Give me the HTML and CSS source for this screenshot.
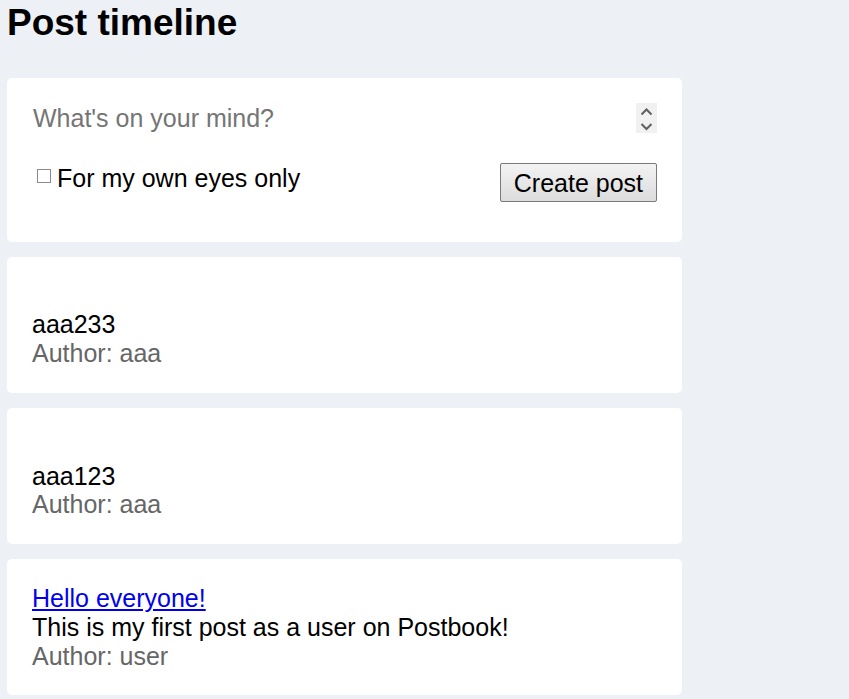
FILE: index.html
```html
<!DOCTYPE html>
<html lang="en">
<head>
<meta charset="utf-8">
<title>Post timeline</title>
<link rel="stylesheet" href="styles.css">
</head>
<body>
<div class="page">
  <h1 class="page-title">Post timeline</h1>
  <div class="feed">
    <form class="card composer">
      <div class="input-row">
        <textarea class="composer-input" rows="1" placeholder="What's on your mind?"></textarea>
        <div class="spin">
          <svg width="21" height="30" viewBox="0 0 21 30" aria-hidden="true">
            <path d="M5.5 11.5 L10.5 6.5 L15.5 11.5" fill="none" stroke="#5f5f5f" stroke-width="2"/>
            <path d="M5.5 21 L10.5 26 L15.5 21" fill="none" stroke="#5f5f5f" stroke-width="2"/>
          </svg>
        </div>
      </div>
      <div class="actions">
        <label class="private">
          <input class="private-box" type="checkbox">
          <span>For my own eyes only</span>
        </label>
        <button class="submit" type="button">Create post</button>
      </div>
    </form>

    <article class="card post">
      <div class="post-title"></div>
      <div class="post-body">aaa233</div>
      <div class="post-author">Author: aaa</div>
    </article>

    <article class="card post">
      <div class="post-title"></div>
      <div class="post-body">aaa123</div>
      <div class="post-author">Author: aaa</div>
    </article>

    <article class="card post">
      <div class="post-title"><a href="#" class="post-link">Hello everyone!</a></div>
      <div class="post-body">This is my first post as a user on Postbook!</div>
      <div class="post-author">Author: user</div>
    </article>
  </div>
</div>
</body>
</html>
```

FILE: styles.css
```css
html, body {
  margin: 0;
  padding: 0;
  background: #edf0f5;
}

body {
  font-family: "Liberation Sans", Arial, sans-serif;
  color: #000;
  overflow: hidden;
}

.page {
  padding: 0 7px;
}

.page-title {
  margin: 2px 0 34px;
  font-size: 37px;
  font-weight: bold;
  line-height: normal;
}

.feed {
  width: 675px;
  display: flex;
  flex-direction: column;
  gap: 15px;
}

.card {
  background: #fff;
  border-radius: 5px;
  padding: 25px;
  font-size: 25px;
  line-height: 1.15;
}

.composer {
  margin: 0;
  padding-bottom: 40px;
}

.input-row {
  display: flex;
  align-items: flex-start;
  margin-bottom: 29px;
}

.composer-input {
  flex: 1;
  height: 30px;
  box-sizing: border-box;
  border: none;
  outline: none;
  resize: none;
  overflow: hidden;
  padding: 1px 1px;
  margin: 0;
  font-family: "Liberation Sans", Arial, sans-serif;
  font-size: 25px;
  line-height: 1.15;
  color: #000;
  background: transparent;
}

.composer-input::placeholder {
  color: #757575;
}

.spin {
  width: 21px;
  height: 30px;
  background: #f1f1f1;
  flex: none;
}

.spin svg {
  display: block;
}

.actions {
  display: flex;
  justify-content: space-between;
  align-items: flex-start;
  height: 39.5px;
}

.private {
  display: flex;
  align-items: flex-start;
  padding-top: 1.5px;
}

.private-box {
  appearance: none;
  -webkit-appearance: none;
  width: 14px;
  height: 14px;
  box-sizing: border-box;
  border: 1px solid #8a8a8a;
  background: #fff;
  margin: 5.5px 6px 0 5px;
  flex: none;
}

.submit {
  height: 39.5px;
  box-sizing: border-box;
  margin-top: 0.5px;
  padding: 2px 13px 0;
  border: 1px solid #7a7a7a;
  border-radius: 2px;
  background: linear-gradient(#f3f3f3, #dcdcdc);
  font-family: "Liberation Sans", Arial, sans-serif;
  font-size: 25px;
  line-height: 1.15;
  color: #000;
}

.post-title {
  min-height: 1.15em;
}

.post-link {
  color: #0000ee;
  text-decoration: underline;
}

.post-author {
  color: #666;
}
```
